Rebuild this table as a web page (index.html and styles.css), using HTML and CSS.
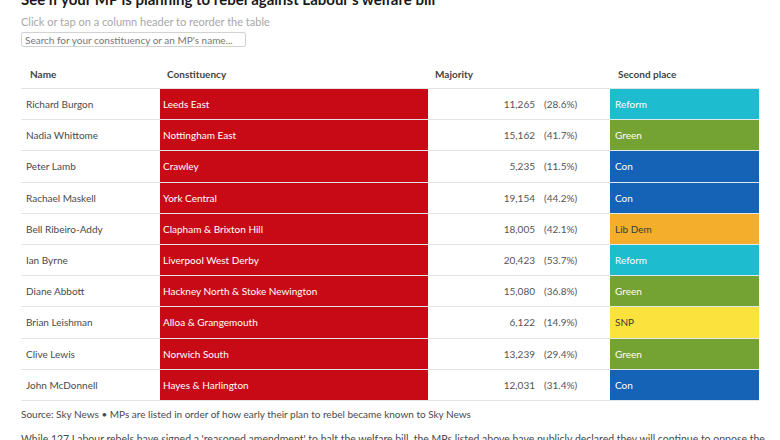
FILE: index.html
```html
<!DOCTYPE html>
<html lang="en">
<head>
<meta charset="utf-8">
<title>Labour welfare bill rebels</title>
<link rel="stylesheet" href="styles.css">
</head>
<body>
<div class="page">
  <h2 class="title">See if your MP is planning to rebel against Labour's welfare bill</h2>
  <p class="subtitle">Click or tap on a column header to reorder the table</p>
  <input class="search" type="text" placeholder="Search for your constituency or an MP's name...">
  <table class="mps">
    <colgroup>
      <col class="w-name">
      <col class="w-const">
      <col class="w-maj">
      <col class="w-second">
    </colgroup>
    <thead>
      <tr>
        <th class="c-name">Name</th>
        <th class="c-const">Constituency</th>
        <th class="c-maj">Majority</th>
        <th class="c-second">Second place</th>
      </tr>
    </thead>
    <tbody>
      <tr><td class="c-name">Richard Burgon</td><td class="c-const lab">Leeds East</td><td class="c-maj"><span class="num">11,265</span><span class="pct">(28.6%)</span></td><td class="c-second reform">Reform</td></tr>
      <tr><td class="c-name">Nadia Whittome</td><td class="c-const lab">Nottingham East</td><td class="c-maj"><span class="num">15,162</span><span class="pct">(41.7%)</span></td><td class="c-second green">Green</td></tr>
      <tr><td class="c-name">Peter Lamb</td><td class="c-const lab">Crawley</td><td class="c-maj"><span class="num">5,235</span><span class="pct">(11.5%)</span></td><td class="c-second con">Con</td></tr>
      <tr><td class="c-name">Rachael Maskell</td><td class="c-const lab">York Central</td><td class="c-maj"><span class="num">19,154</span><span class="pct">(44.2%)</span></td><td class="c-second con">Con</td></tr>
      <tr><td class="c-name">Bell Ribeiro-Addy</td><td class="c-const lab">Clapham &amp; Brixton Hill</td><td class="c-maj"><span class="num">18,005</span><span class="pct">(42.1%)</span></td><td class="c-second libdem">Lib Dem</td></tr>
      <tr><td class="c-name">Ian Byrne</td><td class="c-const lab">Liverpool West Derby</td><td class="c-maj"><span class="num">20,423</span><span class="pct">(53.7%)</span></td><td class="c-second reform">Reform</td></tr>
      <tr><td class="c-name">Diane Abbott</td><td class="c-const lab">Hackney North &amp; Stoke Newington</td><td class="c-maj"><span class="num">15,080</span><span class="pct">(36.8%)</span></td><td class="c-second green">Green</td></tr>
      <tr><td class="c-name">Brian Leishman</td><td class="c-const lab">Alloa &amp; Grangemouth</td><td class="c-maj"><span class="num">6,122</span><span class="pct">(14.9%)</span></td><td class="c-second snp">SNP</td></tr>
      <tr><td class="c-name">Clive Lewis</td><td class="c-const lab">Norwich South</td><td class="c-maj"><span class="num">13,239</span><span class="pct">(29.4%)</span></td><td class="c-second green">Green</td></tr>
      <tr><td class="c-name">John McDonnell</td><td class="c-const lab">Hayes &amp; Harlington</td><td class="c-maj"><span class="num">12,031</span><span class="pct">(31.4%)</span></td><td class="c-second con">Con</td></tr>
    </tbody>
  </table>
  <p class="source">Source: Sky News • MPs are listed in order of how early their plan to rebel became known to Sky News</p>
  <p class="body">While 127 Labour rebels have signed a 'reasoned amendment' to halt the welfare bill, the MPs listed above have publicly declared they will continue to oppose the bill.</p>
</div>
</body>
</html>
```
FILE: styles.css
```css
html, body {
  margin: 0;
  padding: 0;
  background: #fff;
  overflow: hidden;
}
body {
  font-family: "Lato", "Open Sans", sans-serif;
  color: #4a4a4a;
}
.page {
  padding: 0 21px;
  margin-top: -10px;
}
.title {
  margin: 0;
  font-size: 15px;
  line-height: 19px;
  font-weight: 700;
  color: #1a1a1a;
  white-space: nowrap;
}
.subtitle {
  margin: 6px 0 0;
  font-size: 11px;
  line-height: 13px;
  color: #a8a8a8;
}
.search {
  display: block;
  margin: 4px 0 0;
  width: 225px;
  height: 15px;
  box-sizing: border-box;
  padding: 0 3px;
  border: 1px solid #d2d2d2;
  border-radius: 2px;
  font-family: inherit;
  font-size: 10px;
  color: #555;
  outline: none;
}
.search::placeholder {
  color: #777;
}
.mps {
  margin-top: 12px;
  width: 738px;
  border-collapse: collapse;
  table-layout: fixed;
  font-size: 10px;
}
.w-name { width: 139px; }
.w-const { width: 268px; }
.w-maj { width: 182px; }
.w-second { width: 149px; }
.mps th {
  height: 29px;
  text-align: left;
  font-weight: 700;
  color: #444;
  border-bottom: 1px solid #e2e2e2;
  padding: 0;
}
.mps td {
  height: 30.2px;
  padding: 0;
  border-bottom: 1px solid #e4e4e4;
  vertical-align: middle;
  white-space: nowrap;
  overflow: hidden;
  font-weight: 400;
}
th.c-name { padding-left: 9px; }
th.c-const { padding-left: 7px; }
th.c-maj { padding-left: 7px; }
th.c-second { padding-left: 8px; }
td.c-name { padding-left: 5px; color: #4a4a4a; }
td.c-const { padding-left: 3px; color: #fff; }
td.c-second { padding-left: 5px; color: #fff; border-bottom-color: #e0e8ee; }
td.c-maj { text-align: right; color: #555; }
.num { display: inline-block; }
.pct { display: inline-block; width: 42px; margin-left: 9px; margin-right: 24px; text-align: left; }
.lab { background: #c70a16; border-bottom-color: #e57c84; }
.reform { background: #1ebccf; }
.green { background: #74a334; }
.con { background: #1563b6; }
.libdem { background: #f5ae2c; color: #3a3a3a !important; }
.snp { background: #fbe23c; color: #3a3a3a !important; }
.source {
  margin: 6px 0 0;
  font-size: 10px;
  line-height: 14px;
  color: #4a4a4a;
}
.body {
  margin: 10px -8px 0 0;
  font-size: 10.5px;
  line-height: 16px;
  color: #4a4a4a;
}
```
